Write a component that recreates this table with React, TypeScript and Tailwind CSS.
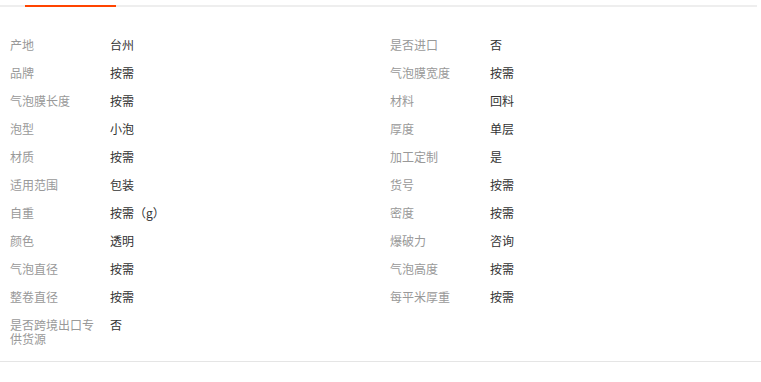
import React from 'react';

const leftAttrs: [string, string][] = [
  ['产地', '台州'],
  ['品牌', '按需'],
  ['气泡膜长度', '按需'],
  ['泡型', '小泡'],
  ['材质', '按需'],
  ['适用范围', '包装'],
  ['自重', '按需（g）'],
  ['颜色', '透明'],
  ['气泡直径', '按需'],
  ['整卷直径', '按需'],
  ['是否跨境出口专供货源', '否'],
];

const rightAttrs: [string, string][] = [
  ['是否进口', '否'],
  ['气泡膜宽度', '按需'],
  ['材料', '回料'],
  ['厚度', '单层'],
  ['加工定制', '是'],
  ['货号', '按需'],
  ['密度', '按需'],
  ['爆破力', '咨询'],
  ['气泡高度', '按需'],
  ['每平米厚重', '按需'],
];

const AttrColumn = ({ items }: { items: [string, string][] }) => (
  <div className="flex flex-col">
    {items.map(([label, value]) => (
      <div key={label} className="flex py-[7px] text-[12px] leading-[14px]">
        <div className="w-[110px] shrink-0 pl-[10px] pr-[10px] text-[#999]">{label}</div>
        <div className="text-[#333]">{value}</div>
      </div>
    ))}
  </div>
);

const App = () => {
  return (
    <div
      className="w-[761px] h-[382px] bg-white"
      style={{ fontFamily: '"Noto Sans CJK SC", "Noto Sans", sans-serif' }}
    >
      {/* tab strip */}
      <div className="relative h-[7px] mr-[4px] border-b-2 border-[#eeeeee]">
        <span className="absolute left-[25px] bottom-[-2px] w-[91px] h-[2px] bg-[#ff4400]" />
      </div>

      <div className="grid grid-cols-[380px_1fr] pt-[24px] pb-[8px] border-b border-[#e5e5e5]">
        <AttrColumn items={leftAttrs} />
        <AttrColumn items={rightAttrs} />
      </div>
    </div>
  );
};

export default App;
